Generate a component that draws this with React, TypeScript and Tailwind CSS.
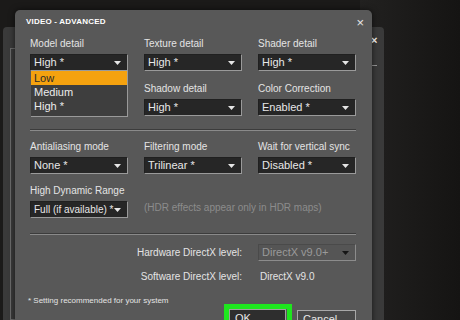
import React from "react";

const Arrow = ({ dark }: { dark?: boolean }) => (
  <svg width="7" height="4" viewBox="0 0 7 4" className="shrink-0">
    <path d="M0 0H7L3.5 4Z" fill={dark ? "#151515" : "#e6e6e6"} />
  </svg>
);

function Select({ value, disabled, small }: { value: string; disabled?: boolean; small?: boolean }) {
  return (
    <div
      className={
        "flex h-[17px] w-[98px] items-center justify-between whitespace-nowrap border-t border-l border-b border-r pl-[3px] pr-[6px] leading-none " +
        (small ? "text-[10px] " : "text-[11px] ") +
        (disabled
          ? "border-t-[#4a4a4a] border-l-[#4a4a4a] border-b-[#8c8c8c] border-r-[#8c8c8c] bg-[#555555] text-[#9a9a9a]"
          : "border-t-[#202020] border-l-[#202020] border-b-[#9a9a9a] border-r-[#9a9a9a] bg-[#262626] text-[#e8e8e8]")
      }
    >
      <span>{value}</span>
      <Arrow dark={disabled} />
    </div>
  );
}

function Field({ label, value, small }: { label: string; value: string; small?: boolean }) {
  return (
    <div className="flex flex-col gap-[4px]">
      <div className="h-[12px] whitespace-nowrap text-[10px] leading-[12px] text-[#e4e4e4]">{label}</div>
      <Select value={value} small={small} />
    </div>
  );
}

const Separator = () => (
  <div className="h-[2px] w-[326px] border-t border-t-[#3c3c3c] border-b border-b-[#8a8a8a]" />
);

export default function App() {
  return (
    <div
      className="relative h-[320px] w-[460px] overflow-hidden bg-[#1b1a19]"
      style={{ fontFamily: '"Liberation Sans", Arial, sans-serif' }}
    >
      {/* blurred background glow */}
      <div className="absolute left-[360px] top-0 h-[320px] w-[100px] bg-gradient-to-r from-[#222120] to-[#151413]" />

      {/* window behind */}
      <div className="absolute left-[3px] top-[27px] h-[300px] w-[381px] rounded-t-[4px] bg-[#3a3a3a]">
        <div className="absolute left-[7px] top-[21px] h-[272px] w-[360px] border border-[#6a6a6a]" />
        <div className="absolute left-[368px] top-[5px] text-[11px] font-bold text-white">×</div>
        <div className="absolute left-[368px] top-[38px] h-[1px] w-[6px] bg-[#9a9a9a]" />
      </div>

      {/* main dialog */}
      <div className="absolute left-[15px] top-[10px] h-[320px] w-[357px] rounded-t-[5px] bg-[#585858] pl-[15px] pt-[6px] shadow-[0_0_6px_rgba(0,0,0,0.6)]">
        <div className="flex h-[12px] items-center justify-between pr-[8px]">
          <span className="-ml-[4px] text-[8px] font-bold tracking-[0.2px] text-white">VIDEO - ADVANCED</span>
          <span className="text-[13px] leading-none text-[#e6e6e6]">×</span>
        </div>

        <div className="relative mt-[10px] grid grid-cols-[98px_98px_98px] gap-x-[16px] gap-y-[12px]">
          <Field label="Model detail" value="High *" />
          <Field label="Texture detail" value="High *" />
          <Field label="Shader detail" value="High *" />
          <div />
          <Field label="Shadow detail" value="High *" />
          <Field label="Color Correction" value="Enabled *" />

          {/* open dropdown list */}
          <div className="absolute left-[1px] top-[33px] flex w-[97px] flex-col border-r border-b border-r-[#9a9a9a] border-b-[#9a9a9a] bg-[#3e3e3e] pb-[3px] text-[11px] leading-[14px] text-[#ececec]">
            <div className="h-[14px] bg-[#f5a20f] pl-[3px] text-[#2a2a2a]">Low</div>
            <div className="h-[14px] pl-[3px]">Medium</div>
            <div className="h-[14px] pl-[3px]">High *</div>
          </div>
        </div>

        <div className="mt-[13px]">
          <Separator />
        </div>

        <div className="mt-[10px] grid grid-cols-[98px_98px_98px] gap-x-[16px] gap-y-[12px]">
          <Field label="Antialiasing mode" value="None *" />
          <Field label="Filtering mode" value="Trilinear *" />
          <Field label="Wait for vertical sync" value="Disabled *" />
          <div className="-mt-[1px]">
            <Field label="High Dynamic Range" value="Full (if available) *" small />
          </div>
          <div className="col-span-2 flex items-end whitespace-nowrap pb-[3px] text-[10px] text-[#8c8c8c]">
            (HDR effects appear only in HDR maps)
          </div>
        </div>

        <div className="mt-[15px]">
          <Separator />
        </div>

        <div className="mt-[9px] grid grid-cols-[212px_98px] items-center gap-x-[16px] gap-y-[10px] text-[10px] text-[#e4e4e4]">
          <div className="text-right">Hardware DirectX level:</div>
          <Select value="DirectX v9.0+" disabled />
          <div className="text-right leading-[12px]">Software DirectX level:</div>
          <div className="pl-[2px] leading-[12px]">DirectX v9.0</div>
        </div>

        <div className="mt-[13px] flex items-start">
          <div className="-ml-[2px] w-[196px] text-[8px] leading-[10px] text-[#e4e4e4]">
            * Setting recommended for your system
          </div>
          <div className="mt-[8px] flex items-start gap-[5px]">
            <div className="border-[5px] border-[#1ee61e] pr-[1px]">
              <div className="flex h-[18px] w-[57px] items-start border border-[#a0a0a0] bg-[#2e2e2e] pl-[5px] text-[11px] leading-[16px] text-[#e8e8e8]">
                OK
              </div>
            </div>
            <div className="mt-[6px] flex h-[18px] w-[59px] items-start border border-[#a8a8a8] bg-[#4a4a4a] pl-[5px] text-[11px] leading-[16px] text-[#e8e8e8]">
              Cancel
            </div>
          </div>
        </div>
      </div>
    </div>
  );
}
